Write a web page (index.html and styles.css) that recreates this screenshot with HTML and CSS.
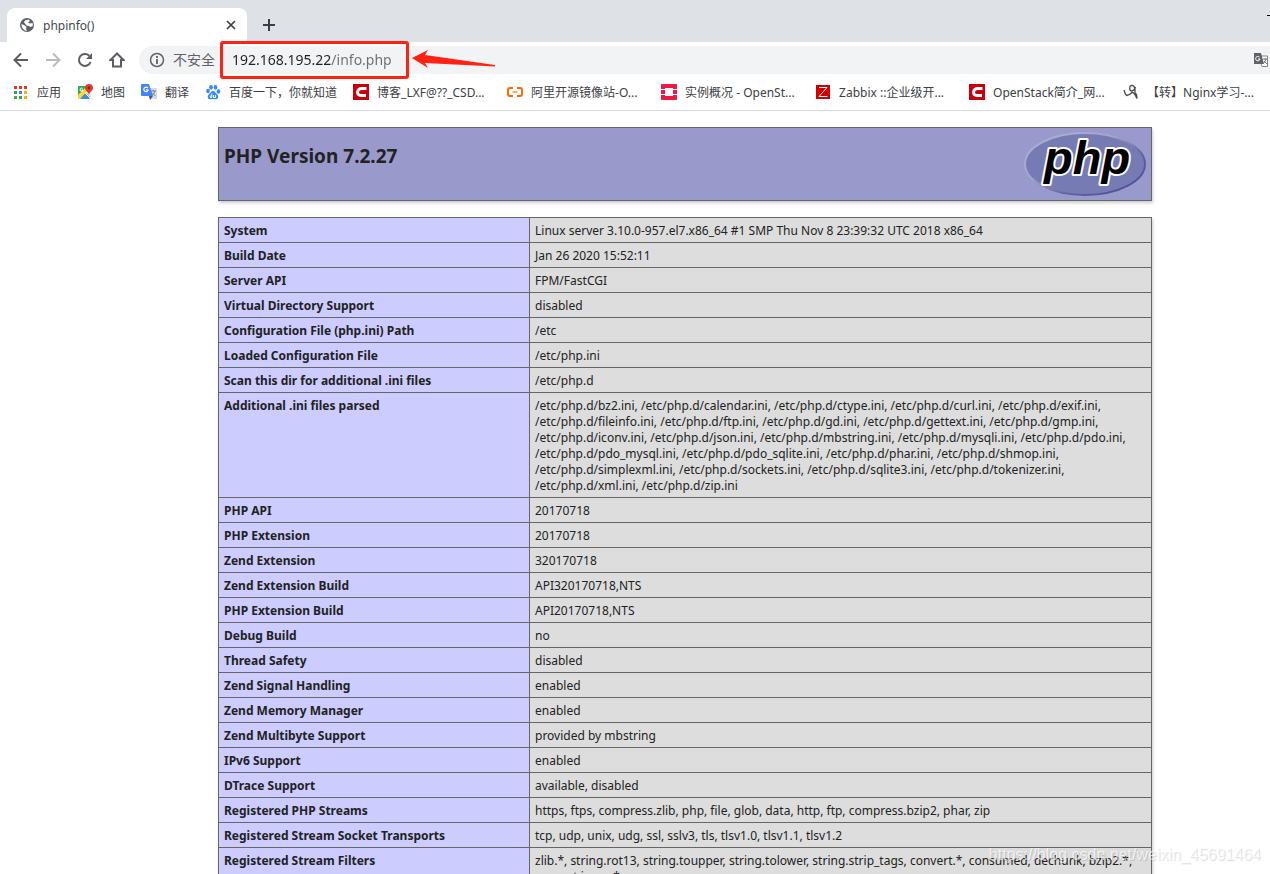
FILE: index.html
```html
<!DOCTYPE html>
<html lang="zh-CN">
<head>
<meta charset="utf-8">
<title>phpinfo()</title>
<link rel="stylesheet" href="styles.css">
</head>
<body>
<div class="window">
  <header class="chrome">
    <div class="tabstrip">
      <div class="tab">
        <svg class="tab-icon" viewBox="0 0 16 16"><circle cx="8" cy="8" r="7" fill="#5f6368"/><path d="M2.500 7 5 8l2.500 2-.5 1.500 1 2.500C4.500 13.500 2.500 11 2.500 7zM6 3.500 9.500 2.500 11 4 9 5.500l2 1 2.500-.5.500 2.500-2 1.500-2.500-1L7.500 8.500 6 6.500 5 5z" fill="#fff"/></svg>
        <span class="tab-title">phpinfo()</span>
        <button class="icon-button" aria-label="关闭标签页"><svg viewBox="0 0 16 16"><path d="M4 4l8 8M12 4l-8 8" stroke="#3c4043" stroke-width="1.700" fill="none"/></svg></button>
      </div>
      <button class="icon-button new-tab" aria-label="新标签页"><svg viewBox="0 0 16 16"><path d="M8 2v12M2 8h12" stroke="#3c4043" stroke-width="2" fill="none"/></svg></button>
      <span class="minimize"></span>
    </div>
    <div class="toolbar">
      <button class="icon-button" aria-label="后退"><svg viewBox="0 0 16 16"><path d="M15 8H2M8 1.500 1.500 8 8 14.500" stroke="#5a5e63" stroke-width="2" fill="none"/></svg></button>
      <button class="icon-button" aria-label="前进"><svg viewBox="0 0 16 16"><path d="M1 8h13M8 1.500 14.500 8 8 14.500" stroke="#babcbe" stroke-width="2" fill="none"/></svg></button>
      <button class="icon-button" aria-label="重新加载"><svg viewBox="0 0 16 16"><path d="M13.600 10A6 6 0 1 1 12.200 3.700" stroke="#5a5e63" stroke-width="2" fill="none"/><path d="M15 1v6H9z" fill="#5a5e63"/></svg></button>
      <button class="icon-button" aria-label="主页"><svg viewBox="0 0 16 16"><path d="M8 1.500 1.500 8H4v6.500h8V8h2.500z" stroke="#5a5e63" stroke-width="2" fill="none"/></svg></button>
      <div class="omnibox">
        <svg class="info" viewBox="0 0 16 16"><circle cx="8" cy="8" r="6.500" stroke="#5f6368" stroke-width="1.500" fill="none"/><path d="M8 7v5M8 4v2" stroke="#5f6368" stroke-width="1.800"/></svg>
        <label class="security" for="address">不安全</label>
        <div class="address-wrap">
          <input id="address" class="address" type="text" value="192.168.195.22/info.php" spellcheck="false">
          <span class="mark"></span>
          <svg class="arrow" viewBox="0 0 84 20"><path d="M0 8 16 0l-3 5 70 10v1.500L13 13l3 5z" fill="#ff2113"/></svg>
        </div>
        <button class="icon-button translate" aria-label="翻译此页"><svg viewBox="0 0 16 16"><path d="M5 4h9.500v10.500H9L8 12" fill="#fff" stroke="#85888b"/><path d="M1 1h7l3 11H1z" fill="#5f6368"/><path d="M6.500 5.200A2.200 2.200 0 1 0 7 7H5" fill="none" stroke="#fff"/><path d="M10 7h4M12 6v1M13 7q-1 3-3 5M11 9l3 3" stroke="#777" fill="none"/></svg></button>
      </div>
    </div>
    <nav class="bookmarks" aria-label="书签">
      <a class="bookmark" href="#"><svg viewBox="0 0 16 16"><path fill="#ea3323" d="M1 2h3v3H1zM6 2h3v3H6zM11 2h3v3h-3z"/><path fill="#34a853" d="M1 7h3v3H1zM1 12h3v3H1zM6 12h3v3H6z"/><path fill="#4285f4" d="M6 7h3v3H6z"/><path fill="#fbae05" d="M11 7h3v3h-3zM11 12h3v3h-3z"/></svg><span>应用</span></a>
      <a class="bookmark" href="#"><svg viewBox="0 0 16 16"><path fill="#34a853" d="M1 2h12v12H1z"/><path fill="#eceff1" d="M8 8l6-5v11z"/><path fill="#fdd835" d="M1 11 10 2l2 3L3 15H1z"/><path fill="#4285f4" d="M3 15l5-5 5 5z"/><path d="m8 9 6 6" stroke="#fff"/><path fill="#e53935" d="M12 0a4 4 0 0 1 4 4c0 2.500-3 3.500-4 7-1-3.500-4-4.500-4-7a4 4 0 0 1 4-4z"/><circle cx="12" cy="4" r="1.400" fill="#8e2020"/><path d="M5.500 4.500A1.500 1.500 0 1 0 6 6H4.500" fill="none" stroke="#fff"/></svg><span>地图</span></a>
      <a class="bookmark" href="#"><svg viewBox="0 0 16 16"><path fill="#dadce0" d="M6 4h9q1 0 1 1v10H9z"/><path fill="#4285f4" d="M1 0h7l4 12H1q-1 0-1-1V1q0-1 1-1z"/><path fill="#2a56c6" d="m8 12h4l-3 4z"/><path d="M7 4.200A2.200 2.200 0 1 0 7.200 6H5" fill="none" stroke="#fff" stroke-width="1.200"/><path d="M10 7h5M12.500 6v1M14 7q-1 3-3 5M11.500 9l3 3" stroke="#78838c" fill="none"/></svg><span>翻译</span></a>
      <a class="bookmark" href="#"><svg viewBox="0 0 16 16"><g fill="#3388ff"><ellipse cx="3" cy="7" rx="1.800" ry="2.300"/><ellipse cx="6" cy="3.300" rx="1.800" ry="2.400"/><ellipse cx="10.500" cy="3.300" rx="1.800" ry="2.400"/><ellipse cx="13.400" cy="7.500" rx="1.800" ry="2.300"/><path d="M8 7c2 0 2.500 2 4 3.300 2 1.800 1.500 5-1 5-1.500 0-2-.3-3-.3s-1.500.3-3 .3c-2.500 0-3-3.200-1-5C5.500 9 6 7 8 7z"/></g><path d="M6.800 9.500v4H5.500q-1.500-1.500 1.300-2M8.500 11v2.500h2V11" stroke="#fff" fill="none"/></svg><span>百度一下，你就知道</span></a>
      <a class="bookmark long" href="#"><svg viewBox="0 0 16 16"><path fill="#c7000b" d="M0 0h16v16H0z"/><path d="M13.500 4.500H9Q5 4.500 4.500 8q0 3.500 3.500 3.500h5" fill="none" stroke="#fff" stroke-width="2.800"/></svg><span>博客_LXF@??_CSD...</span></a>
      <a class="bookmark long" href="#"><svg viewBox="0 0 16 16"><path d="M6 4H3Q1 4 1 6v4q0 2 2 2h3M10 4h3q2 0 2 2v4q0 2-2 2h-3" fill="none" stroke="#ff6a00" stroke-width="2"/><path d="M5.500 8h5" stroke="#ff8a33" stroke-width="1.500"/></svg><span>阿里开源镜像站-O...</span></a>
      <a class="bookmark long" href="#"><svg viewBox="0 0 16 16"><path fill="#ed1944" d="M1 0h14q1 0 1 1v4h-4V4H4v1H0V1q0-1 1-1zM0 6h4v4H0zM12 6h4v4h-4zM0 11h4v1h8v-1h4v4q0 1-1 1H1q-1 0-1-1z"/></svg><span>实例概况 - OpenSt...</span></a>
      <a class="bookmark long" href="#"><svg viewBox="0 0 16 16"><path fill="#d40000" d="M1 1h14v14H1z"/><path d="M4 3.500h8L4 12.500h8.500" fill="none" stroke="#fff"/></svg><span>Zabbix ::企业级开...</span></a>
      <a class="bookmark long" href="#"><svg viewBox="0 0 16 16"><path fill="#c7000b" d="M0 0h16v16H0z"/><path d="M13.500 4.500H9Q5 4.500 4.500 8q0 3.500 3.500 3.500h5" fill="none" stroke="#fff" stroke-width="2.800"/></svg><span>OpenStack简介_网...</span></a>
      <a class="bookmark long" href="#"><svg viewBox="0 0 16 16"><path d="M1 6q1 4 2.500 5.500Q7 11 9.500 8M12 4.500Q11 1 8.500 1.500T7 6q2 2.500 5-1.500V9q2 1 2 5.500Q13 11 9.500 8" fill="none" stroke="#4c4c4c" stroke-width="1.300"/></svg><span>【转】Nginx学习-...</span></a>
    </nav>
  </header>
  <main class="page">
    <section class="banner">
      <h1>PHP Version 7.2.27</h1>
      <svg class="logo" viewBox="0 0 122 64" role="img" aria-label="PHP logo">
        <defs><linearGradient id="rim" x1="0" y1="0" x2="1" y2="1"><stop offset="0" stop-color="#aeb2d5"/><stop offset=".4" stop-color="#a1a5cc"/><stop offset=".65" stop-color="#6065a5"/><stop offset="1" stop-color="#484893"/></linearGradient></defs>
        <ellipse cx="61" cy="32" rx="60" ry="31" fill="#777bb3" stroke="url(#rim)" stroke-width="2"/>
        <text class="logo-text" x="20" y="42">php</text>
      </svg>
    </section>
    <table class="info-table">
      <tbody>
      <tr><th scope="row">System</th><td>Linux server 3.10.0-957.el7.x86_64 #1 SMP Thu Nov 8 23:39:32 UTC 2018 x86_64</td></tr>
      <tr><th scope="row">Build Date</th><td>Jan 26 2020 15:52:11</td></tr>
      <tr><th scope="row">Server API</th><td>FPM/FastCGI</td></tr>
      <tr><th scope="row">Virtual Directory Support</th><td>disabled</td></tr>
      <tr><th scope="row">Configuration File (php.ini) Path</th><td>/etc</td></tr>
      <tr><th scope="row">Loaded Configuration File</th><td>/etc/php.ini</td></tr>
      <tr><th scope="row">Scan this dir for additional .ini files</th><td>/etc/php.d</td></tr>
      <tr><th scope="row">Additional .ini files parsed</th><td>/etc/php.d/bz2.ini, /etc/php.d/calendar.ini, /etc/php.d/ctype.ini, /etc/php.d/curl.ini, /etc/php.d/exif.ini,<br>/etc/php.d/fileinfo.ini, /etc/php.d/ftp.ini, /etc/php.d/gd.ini, /etc/php.d/gettext.ini, /etc/php.d/gmp.ini,<br>/etc/php.d/iconv.ini, /etc/php.d/json.ini, /etc/php.d/mbstring.ini, /etc/php.d/mysqli.ini, /etc/php.d/pdo.ini,<br>/etc/php.d/pdo_mysql.ini, /etc/php.d/pdo_sqlite.ini, /etc/php.d/phar.ini, /etc/php.d/shmop.ini,<br>/etc/php.d/simplexml.ini, /etc/php.d/sockets.ini, /etc/php.d/sqlite3.ini, /etc/php.d/tokenizer.ini,<br>/etc/php.d/xml.ini, /etc/php.d/zip.ini</td></tr>
      <tr><th scope="row">PHP API</th><td>20170718</td></tr>
      <tr><th scope="row">PHP Extension</th><td>20170718</td></tr>
      <tr><th scope="row">Zend Extension</th><td>320170718</td></tr>
      <tr><th scope="row">Zend Extension Build</th><td>API320170718,NTS</td></tr>
      <tr><th scope="row">PHP Extension Build</th><td>API20170718,NTS</td></tr>
      <tr><th scope="row">Debug Build</th><td>no</td></tr>
      <tr><th scope="row">Thread Safety</th><td>disabled</td></tr>
      <tr><th scope="row">Zend Signal Handling</th><td>enabled</td></tr>
      <tr><th scope="row">Zend Memory Manager</th><td>enabled</td></tr>
      <tr><th scope="row">Zend Multibyte Support</th><td>provided by mbstring</td></tr>
      <tr><th scope="row">IPv6 Support</th><td>enabled</td></tr>
      <tr><th scope="row">DTrace Support</th><td>available, disabled</td></tr>
      <tr><th scope="row">Registered PHP Streams</th><td>https, ftps, compress.zlib, php, file, glob, data, http, ftp, compress.bzip2, phar, zip</td></tr>
      <tr><th scope="row">Registered Stream Socket Transports</th><td>tcp, udp, unix, udg, ssl, sslv3, tls, tlsv1.0, tlsv1.1, tlsv1.2</td></tr>
      <tr><th scope="row">Registered Stream Filters</th><td>zlib.*, string.rot13, string.toupper, string.tolower, string.strip_tags, convert.*, consumed, dechunk, bzip2.*,<br>convert.iconv.*</td></tr>
      </tbody>
    </table>
  </main>
  <span class="watermark">https://blog.csdn.net/weixin_45691464</span>
</div>
</body>
</html>
```
FILE: styles.css
```css
* { box-sizing: border-box; }
body {
  margin: 0;
  background: #fff;
  color: #222;
  font: 12px/16px "Noto Sans", "Noto Sans CJK SC", sans-serif;
}
.window {
  position: relative;
  height: 100vh;
  display: flex;
  flex-direction: column;
  overflow: hidden;
}
.chrome { flex: none; border-bottom: 1px solid #d9dadc; }
.tabstrip {
  display: flex;
  align-items: center;
  height: 42px;
  padding: 8px 0 0 7px;
  background: #dee1e6;
}
.tab {
  display: flex;
  align-items: center;
  gap: 8px;
  width: 240px;
  height: 34px;
  padding: 0 8px 0 12px;
  border-radius: 8px 8px 0 0;
  background: #fff;
}
.tab-icon { width: 16px; height: 16px; }
.tab-title { flex: 1; padding-top: 2px; color: #45484c; }
.icon-button {
  flex: none;
  width: 16px;
  height: 16px;
  padding: 0;
  border: 0;
  background: none;
}
.icon-button svg { display: block; width: 100%; height: 100%; }
.new-tab { margin-left: 14px; }
.minimize { width: 3px; height: 1px; margin: 0 0 20px auto; background: #000; }
.toolbar {
  display: flex;
  align-items: center;
  gap: 16px;
  height: 36px;
  padding-left: 13px;
}
.omnibox {
  flex: 1;
  display: flex;
  align-items: center;
  height: 28px;
  margin-left: -2px;
  padding: 0 1px 0 10px;
  border-radius: 14px 0 0 14px;
  background: #f1f3f4;
}
.info { flex: none; width: 16px; height: 16px; }
.security { flex: none; margin-left: 8px; color: #5f6368; font-size: 14px; }
.address-wrap { position: relative; flex: 1; margin-left: 17px; }
.address {
  display: block;
  width: 100%;
  padding: 0;
  border: 0;
  outline: 0;
  font: 14px/20px "Noto Sans", sans-serif;
  color: #202124;
  background: linear-gradient(to right, #202124 99px, #6b6f73 99px);
  -webkit-background-clip: text;
  background-clip: text;
  -webkit-text-fill-color: transparent;
}
.mark {
  position: absolute;
  left: -12px;
  top: -9px;
  width: 189px;
  height: 38px;
  border: 3px solid #ff2113;
  border-radius: 3px;
}
.arrow { position: absolute; left: 180px; top: 0; width: 84px; height: 20px; }
.bookmarks {
  display: flex;
  align-items: center;
  gap: 16px;
  height: 32px;
  padding: 0 0 4px 13px;
}
.bookmark {
  flex: none;
  display: flex;
  align-items: center;
  gap: 8px;
  color: #3c4043;
  text-decoration: none;
  white-space: nowrap;
}
.bookmark svg { flex: none; width: 16px; height: 16px; }
.bookmark span { padding-top: 2px; }
.long { width: 138px; }
.page { padding: 16px 118px 0 218px; }
.banner {
  display: flex;
  justify-content: space-between;
  align-items: flex-start;
  padding: 4px 5px;
  border: 1px solid #666;
  background: #99c;
  box-shadow: 1px 2px 3px #ccc;
}
h1 { margin: 12px 0; font-size: 19px; line-height: 24px; }
.logo { width: 122px; height: 64px; }
.logo-text {
  font: italic bold 47px "Liberation Sans", sans-serif;
  fill: #000;
  stroke: #fff;
  stroke-width: 4px;
  stroke-linejoin: round;
  paint-order: stroke;
}
.info-table {
  width: 100%;
  margin-top: 16px;
  border-collapse: collapse;
  box-shadow: 1px 2px 3px #ccc;
}
th, td { padding: 5px 5px 3px; border: 1px solid #666; text-align: left; vertical-align: top; }
th { width: 311px; background: #ccf; }
td { background: #ddd; white-space: nowrap; }
.watermark {
  position: absolute;
  right: 9px;
  bottom: 9px;
  color: rgba(255, 255, 255, .7);
  font: 16px/20px "Liberation Sans", sans-serif;
  text-shadow: 1px 1px 1px rgba(0, 0, 0, .15);
}
```
